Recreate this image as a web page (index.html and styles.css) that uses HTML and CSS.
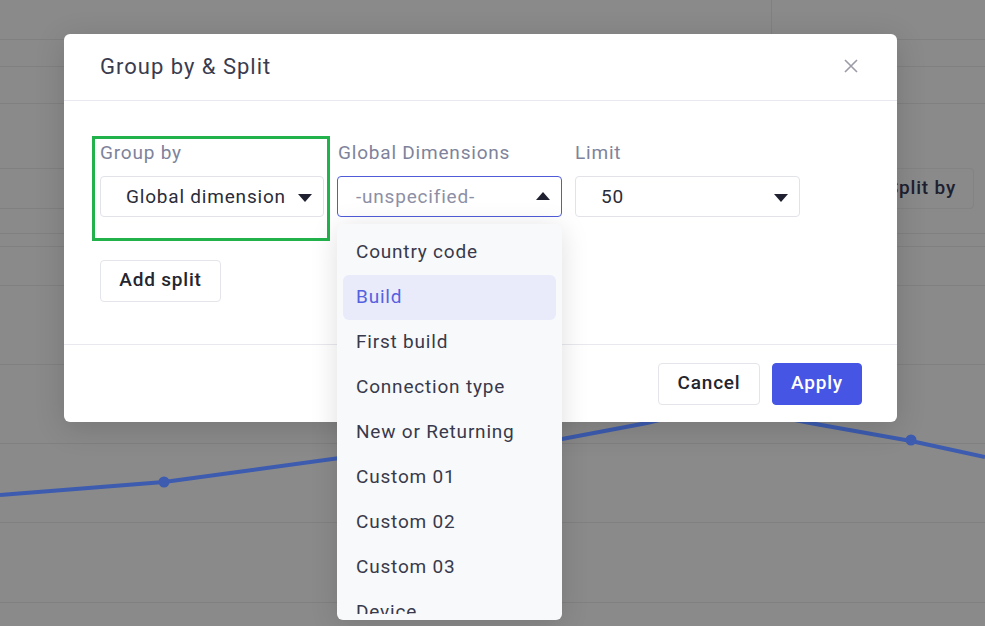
FILE: index.html
```html
<!DOCTYPE html>
<html lang="en">
<head>
<meta charset="utf-8">
<link rel="stylesheet" href="styles.css">
</head>
<body>
<div class="page">
  <div class="page-top"><div class="page-top-side"></div></div>
  <div class="page-row page-row-a"></div>
  <div class="page-row page-row-b"></div>
  <div class="page-toolbar">
    <div class="page-tool-left"></div>
    <button class="page-button" type="button">Split by</button>
  </div>
  <div class="page-row page-row-c"></div>
  <div class="chart">
    <svg width="985" height="379" viewBox="0 0 985 379">
      <g stroke="#808080" stroke-width="1">
        <line x1="0" y1="38.5" x2="985" y2="38.5"/>
        <line x1="0" y1="117.5" x2="985" y2="117.5"/>
        <line x1="0" y1="196.5" x2="985" y2="196.5"/>
        <line x1="0" y1="275.5" x2="985" y2="275.5"/>
        <line x1="0" y1="355.5" x2="985" y2="355.5"/>
      </g>
      <polyline points="0,248 164,235 420,200 562,192 647,176 720,158 810,176 911,194 985,210" fill="none" stroke="#3d5cb0" stroke-width="4" stroke-linejoin="round"/>
      <circle cx="164" cy="235" r="5.5" fill="#3d5cb0"/>
      <circle cx="911" cy="193" r="5.5" fill="#3d5cb0"/>
    </svg>
  </div>
</div>

<div class="modal">
  <div class="modal-header">
    <h2 class="modal-title">Group by &amp; Split</h2>
    <button class="modal-close" type="button" aria-label="Close">
      <svg width="14" height="14" viewBox="0 0 14 14"><path d="M1 1L13 13M13 1L1 13" stroke="#9b9ca6" stroke-width="1.6" fill="none"/></svg>
    </button>
  </div>

  <div class="modal-body">
    <div class="fields">
      <div class="field">
        <label class="field-label">Group by</label>
        <div class="select"><span class="select-value">Global dimension</span><span class="caret"></span></div>
      </div>
      <div class="field field-open">
        <label class="field-label">Global Dimensions</label>
        <div class="select select-focus select-narrow"><span class="select-value placeholder">-unspecified-</span><span class="caret caret-up"></span></div>
        <div class="dropdown">
          <ul class="dropdown-list">
            <li class="dropdown-item">Country code</li>
            <li class="dropdown-item active">Build</li>
            <li class="dropdown-item">First build</li>
            <li class="dropdown-item">Connection type</li>
            <li class="dropdown-item">New or Returning</li>
            <li class="dropdown-item">Custom 01</li>
            <li class="dropdown-item">Custom 02</li>
            <li class="dropdown-item">Custom 03</li>
            <li class="dropdown-item">Device</li>
          </ul>
        </div>
      </div>
      <div class="field">
        <label class="field-label">Limit</label>
        <div class="select"><span class="select-value">50</span><span class="caret"></span></div>
      </div>
    </div>
    <button class="btn btn-split" type="button">Add split</button>
    <div class="highlight"></div>
  </div>

  <div class="modal-footer">
    <button class="btn btn-cancel" type="button">Cancel</button>
    <button class="btn btn-primary" type="button">Apply</button>
  </div>
</div>
</body>
</html>
```

FILE: styles.css
```css
* {
  box-sizing: border-box;
}

html, body {
  margin: 0;
  height: 100%;
  overflow: hidden;
}

body {
  font-family: Roboto, "Noto Sans", sans-serif;
  letter-spacing: 0.8px;
  background: #8a8a8a;
  position: relative;
}

/* dimmed page behind the dialog */
.page {
  width: 985px;
  height: 626px;
}

.page-top {
  height: 40px;
  border-bottom: 1px solid #808080;
  display: flex;
  justify-content: flex-end;
}

.page-top-side {
  width: 214px;
  border-left: 1px solid #808080;
}

.page-row {
  border-bottom: 1px solid #808080;
}

.page-row-a {
  height: 27px;
}

.page-row-b {
  height: 37px;
}

.page-toolbar {
  height: 130px;
  border-bottom: 1px solid #808080;
  display: flex;
  justify-content: space-between;
  align-items: flex-start;
  padding-top: 64px;
}

.page-tool-left {
  width: 64px;
  height: 41px;
  border-top: 1px solid #808080;
  border-bottom: 1px solid #808080;
}

.page-button {
  margin-right: 11px;
  height: 41px;
  padding: 0 17px 3px 12px;
  background: #8a8a8a;
  border: 1px solid #838383;
  border-radius: 4px;
  font-family: inherit;
  letter-spacing: 0.8px;
  font-size: 19px;
  font-weight: 500;
  color: #1d2030;
}

.page-row-c {
  height: 13px;
}

.chart svg {
  display: block;
}

/* dialog */
.modal {
  position: absolute;
  left: 64px;
  top: 34px;
  width: 833px;
  height: 388px;
  background: #fff;
  border-radius: 6px;
  box-shadow: 0 6px 30px rgba(0, 0, 0, 0.15);
}

.modal-header {
  height: 67px;
  padding: 0 36px;
  border-bottom: 1px solid #e8e9ef;
  display: flex;
  align-items: center;
  justify-content: space-between;
}

.modal-title {
  margin: 0 0 2px;
  font-size: 22px;
  font-weight: 400;
  letter-spacing: 1px;
  color: #3a3c4e;
}

.modal-close {
  border: none;
  background: none;
  padding: 0;
  margin-right: 3px;
  margin-bottom: 3px;
  width: 14px;
  height: 14px;
  display: flex;
}

.modal-body {
  position: relative;
  padding: 40px 36px 42px;
}

.fields {
  display: grid;
  grid-template-columns: 224px 225px 225px;
  column-gap: 13px;
  margin-bottom: 43px;
}

.field {
  position: relative;
}

.field-label {
  display: block;
  font-size: 19px;
  line-height: 24px;
  color: #7e839b;
  margin-bottom: 11px;
}

.field-open .field-label {
  padding-left: 1px;
}

.select {
  height: 41px;
  border: 1px solid #e2e3e9;
  border-radius: 4px;
  display: flex;
  align-items: center;
  justify-content: space-between;
  padding: 0 11px 0 25px;
}

.select-narrow {
  padding-left: 18px;
}

.select-focus {
  border-color: #4f5bd9;
}

.select-value {
  font-size: 19px;
  color: #2a2c3a;
}

.placeholder {
  color: #8d8fa5;
}

.caret {
  width: 0;
  height: 0;
  border-left: 7px solid transparent;
  border-right: 7px solid transparent;
  border-top: 8px solid #1f2131;
  margin-top: 2px;
}

.caret-up {
  border-top: none;
  border-bottom: 8px solid #1f2131;
  margin-top: -2px;
}

.dropdown {
  position: absolute;
  left: 0;
  top: 83px;
  width: 225px;
  height: 396px;
  padding: 6px;
  background: #f8f9fb;
  border-radius: 6px;
  box-shadow: 0 4px 28px rgba(0, 0, 0, 0.13);
  z-index: 2;
}

.dropdown-list {
  list-style: none;
  margin: 0;
  padding: 0;
  height: 384px;
  overflow: hidden;
}

.dropdown-item {
  height: 45px;
  line-height: 43px;
  padding-left: 13px;
  border-radius: 6px;
  font-size: 19px;
  color: #383a4b;
}

.dropdown-item.active {
  background: #e9ebfb;
  color: #5661e0;
}

.btn {
  height: 42px;
  padding: 0 0 4px;
  background: #fff;
  border: 1px solid #e4e5eb;
  border-radius: 4px;
  font-family: inherit;
  letter-spacing: 0.8px;
  font-size: 19px;
  font-weight: 500;
  color: #23252f;
}

.btn-split {
  width: 121px;
}

.btn-cancel {
  width: 102px;
}

.btn-primary {
  width: 90px;
  background: #4655e3;
  border-color: #4655e3;
  color: #fff;
}

/* review annotation around the Group by field */
.highlight {
  position: absolute;
  left: 28px;
  top: 35px;
  width: 238px;
  height: 105px;
  border: 3px solid #22b24c;
}

.modal-footer {
  border-top: 1px solid #e8e9ef;
  padding: 18px 35px 0;
  display: flex;
  justify-content: flex-end;
  gap: 12px;
}
```
